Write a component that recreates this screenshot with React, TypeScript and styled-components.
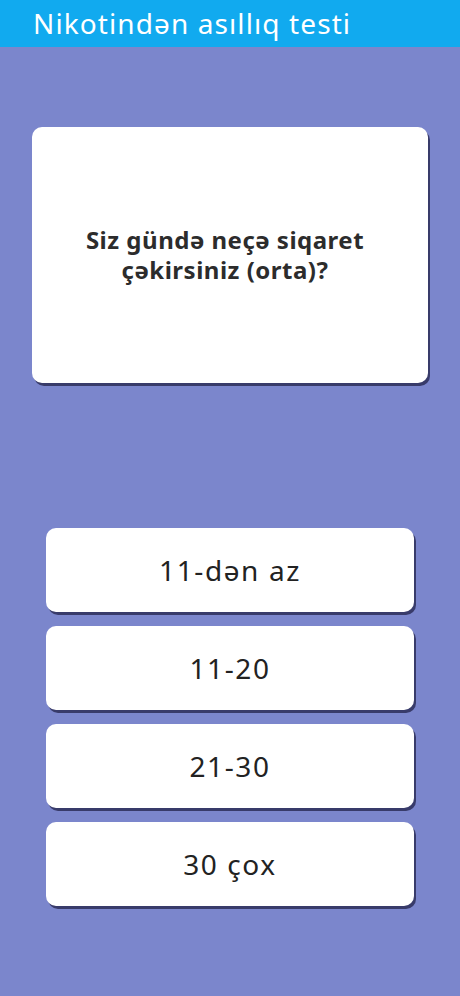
import React from 'react'
import styled, { createGlobalStyle } from 'styled-components'

const options = ['11-dən az', '11-20', '21-30', '30 çox']

const GlobalStyle = createGlobalStyle`
  html, body {
    margin: 0;
    padding: 0;
    background: #7b86cc;
  }
  * { box-sizing: border-box; }
`

const Screen = styled.div`
  width: 460px;
  min-height: 996px;
  background: #7b86cc;
  font-family: 'Noto Sans', 'Open Sans', sans-serif;
  display: flex;
  flex-direction: column;
`

const AppBar = styled.header`
  height: 47px;
  background: #11aaef;
  color: #fff;
  font-size: 28px;
  line-height: 47px;
  padding-left: 33px;
  letter-spacing: 1.1px;
`

const Body = styled.main`
  display: flex;
  flex-direction: column;
  padding: 80px 32px 0;
`

const QuestionCard = styled.div`
  height: 256px;
  background: #fff;
  border-radius: 10px;
  box-shadow: 2px 3px 0 #383b6a;
  display: flex;
  align-items: center;
  justify-content: center;
  padding: 0 40px 0 30px;
`

const QuestionText = styled.h2`
  margin: 0;
  font-size: 24px;
  font-weight: 700;
  line-height: 30px;
  letter-spacing: 0.5px;
  text-align: center;
  color: #2c2c2c;
`

const Options = styled.div`
  display: flex;
  flex-direction: column;
  gap: 14px;
  margin: 145px 14px 0;
`

const OptionButton = styled.button`
  height: 84px;
  border: none;
  border-radius: 10px;
  background: #fff;
  box-shadow: 2px 3px 0 #383b6a;
  font-family: 'Noto Sans', 'Open Sans', sans-serif;
  font-size: 28px;
  color: #222;
  letter-spacing: 1.6px;
  padding: 0;
  cursor: pointer;
`

export default function App() {
  return (
    <>
      <GlobalStyle />
      <Screen>
        <AppBar>Nikotindən asıllıq testi</AppBar>
        <Body>
          <QuestionCard>
            <QuestionText>
              Siz gündə neçə siqaret
              <br />
              çəkirsiniz (orta)?
            </QuestionText>
          </QuestionCard>
          <Options>
            {options.map((o) => (
              <OptionButton key={o}>{o}</OptionButton>
            ))}
          </Options>
        </Body>
      </Screen>
    </>
  )
}
